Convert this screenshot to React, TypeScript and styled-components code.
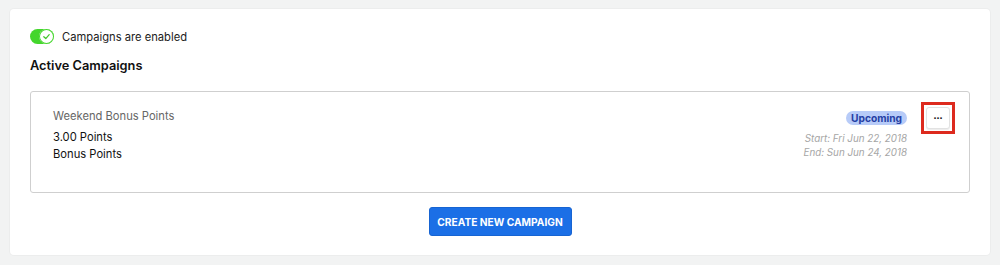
import React from 'react';
import styled, { createGlobalStyle } from 'styled-components';

const GlobalStyle = createGlobalStyle`
  html, body {
    margin: 0;
    padding: 0;
    background: #f2f3f3;
    font-family: Inter, "Noto Sans", "Liberation Sans", sans-serif;
    -webkit-font-smoothing: antialiased;
  }
`;

const Page = styled.div`
  padding: 9px 10px 8px 10px;
`;

const Panel = styled.div`
  background: #fff;
  border-radius: 4px;
  padding: 20px 20px 19px 20px;
  box-shadow: 0 0 0 1px #eceded;
`;

const ToggleRow = styled.label`
  display: flex;
  align-items: center;
  gap: 8px;
  font-size: 11.2px;
  color: #222;
`;

const Switch = styled.span`
  position: relative;
  width: 24px;
  height: 15px;
  border-radius: 8px;
  background: #44d62c;
  display: inline-block;
`;

const Knob = styled.span`
  position: absolute;
  right: 0;
  top: 0;
  width: 15px;
  height: 15px;
  border-radius: 50%;
  background: #fff;
  box-shadow: 0 0 0 1px #44d62c inset;
  display: flex;
  align-items: center;
  justify-content: center;
`;

const Heading = styled.h3`
  margin: 14px 0 18px 0;
  font-size: 12.8px;
  font-weight: 600;
  color: #111;
`;

const Card = styled.div`
  border: 1px solid #cfcfcf;
  border-radius: 3px;
  height: 102px;
  padding: 16px 14px 0 22px;
  box-sizing: border-box;
  display: flex;
  justify-content: space-between;
`;

const Info = styled.div`
  display: flex;
  flex-direction: column;
`;

const Title = styled.div`
  font-size: 11.2px;
  color: #666;
  margin-bottom: 4px;
  line-height: 17px;
`;

const Line = styled.div`
  font-size: 11.2px;
  color: #111;
  line-height: 17px;
`;

const Side = styled.div`
  display: flex;
  gap: 14px;
  align-items: flex-start;
`;

const Dates = styled.div`
  display: flex;
  flex-direction: column;
  align-items: flex-end;
  padding-top: 3px;
`;

const Badge = styled.span`
  background: #b7cbf8;
  color: #2540a4;
  font-size: 10.2px;
  font-weight: 700;
  border-radius: 7px;
  padding: 0 5px;
  line-height: 14px;
  margin-bottom: 7px;
`;

const DateText = styled.div`
  font-size: 9.8px;
  font-style: italic;
  color: #a6a6a6;
  line-height: 14px;
`;

const MenuFrame = styled.div`
  border: 3px solid #dd2a1e;
  padding: 2px;
  margin-top: -6px;
`;

const MenuButton = styled.button`
  width: 24px;
  height: 22px;
  border: 1px solid #e2e2e2;
  border-radius: 3px;
  background: #fff;
  box-shadow: 0 1px 1px rgba(0, 0, 0, 0.08);
  font-size: 11px;
  font-weight: 700;
  color: #222;
  padding: 0 0 5px 0;
  line-height: 1;
  display: flex;
  align-items: center;
  justify-content: center;
`;

const Footer = styled.div`
  display: flex;
  justify-content: center;
  margin-top: 14px;
`;

const PrimaryButton = styled.button`
  background: #1b6fe6;
  color: #fff;
  border: 1px solid #1764d2;
  border-radius: 3px;
  width: 143px;
  height: 29px;
  padding: 0;
  white-space: nowrap;
  font-family: inherit;
  font-size: 10.2px;
  font-weight: 700;
`;

export default function App() {
  return (
    <>
      <GlobalStyle />
      <Page>
        <Panel>
          <ToggleRow>
            <Switch>
              <Knob>
                <svg width="9" height="9" viewBox="0 0 10 10">
                  <path d="M2 5.3 L4.2 7.3 L8 3" fill="none" stroke="#44c62c" strokeWidth="1.4" strokeLinecap="round" strokeLinejoin="round" />
                </svg>
              </Knob>
            </Switch>
            Campaigns are enabled
          </ToggleRow>
          <Heading>Active Campaigns</Heading>
          <Card>
            <Info>
              <Title>Weekend Bonus Points</Title>
              <Line>3.00 Points</Line>
              <Line>Bonus Points</Line>
            </Info>
            <Side>
              <Dates>
                <Badge>Upcoming</Badge>
                <DateText>Start: Fri Jun 22, 2018</DateText>
                <DateText>End: Sun Jun 24, 2018</DateText>
              </Dates>
              <MenuFrame>
                <MenuButton>...</MenuButton>
              </MenuFrame>
            </Side>
          </Card>
          <Footer>
            <PrimaryButton>CREATE NEW CAMPAIGN</PrimaryButton>
          </Footer>
        </Panel>
      </Page>
    </>
  );
}
